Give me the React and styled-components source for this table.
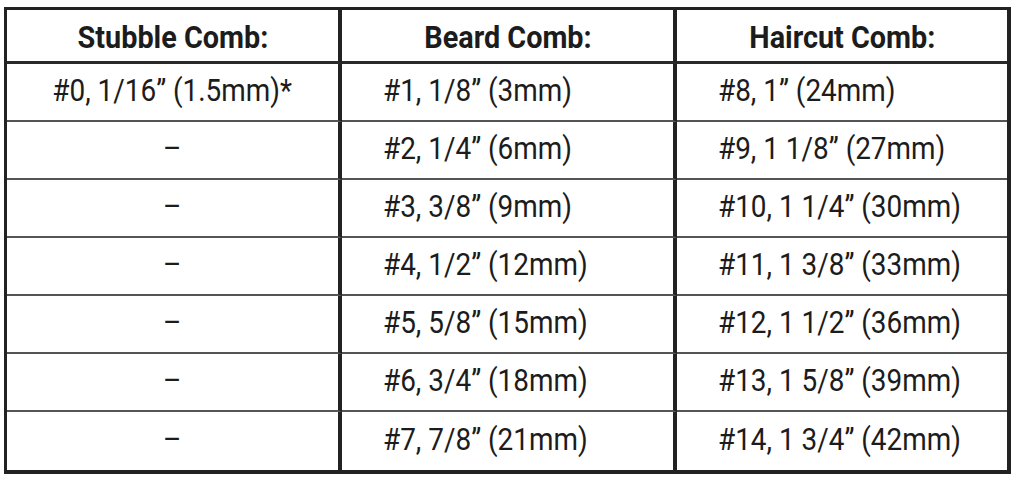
import React from 'react';
import styled, { createGlobalStyle } from 'styled-components';

const Global = createGlobalStyle`
  html, body {
    margin: 0;
    padding: 0;
    background: #ffffff;
  }
`;

const Page = styled.div`
  width: 1019px;
  height: 477px;
  padding: 7px 0 0 4px;
  box-sizing: border-box;
  background: #ffffff;
`;

const Table = styled.div`
  display: grid;
  grid-template-columns: 335px 335px 330px;
  grid-template-rows: 54px repeat(7, 58px);
  width: 1007px;
  border: 3px solid #222222;
  border-right-width: 4px;
  border-bottom-width: 4px;
  box-sizing: border-box;
  font-family: Roboto, 'Liberation Sans', Arial, sans-serif;
  color: #1c1c1c;
`;

const Cell = styled.div`
  display: flex;
  align-items: center;
  justify-content: ${({ $align }) => ($align === 'left' ? 'flex-start' : 'center')};
  padding-left: ${({ $align }) => ($align === 'left' ? '41px' : '0')};
  border-right: ${({ $last }) => ($last ? 'none' : '4px solid #222222')};
  border-bottom: ${({ $head, $lastRow }) =>
    $lastRow ? 'none' : $head ? '3px solid #2a2a2a' : '2px solid #555555'};
  box-sizing: border-box;
  overflow: hidden;
`;

const Label = styled.span`
  display: inline-block;
  white-space: nowrap;
  font-size: ${({ $head }) => ($head ? '32px' : '31px')};
  font-weight: ${({ $head }) => ($head ? 700 : 400)};
  transform: scaleX(0.9);
  transform-origin: ${({ $align }) => ($align === 'left' ? 'left center' : 'center')};
  margin-top: ${({ $head }) => ($head ? '2px' : '-4px')};
`;

const headers = ['Stubble Comb:', 'Beard Comb:', 'Haircut Comb:'];

const rows = [
  ['#0, 1/16\u201D (1.5mm)*', '#1, 1/8\u201D (3mm)', '#8, 1\u201D (24mm)'],
  ['\u2013', '#2, 1/4\u201D (6mm)', '#9, 1 1/8\u201D (27mm)'],
  ['\u2013', '#3, 3/8\u201D (9mm)', '#10, 1 1/4\u201D (30mm)'],
  ['\u2013', '#4, 1/2\u201D (12mm)', '#11, 1 3/8\u201D (33mm)'],
  ['\u2013', '#5, 5/8\u201D (15mm)', '#12, 1 1/2\u201D (36mm)'],
  ['\u2013', '#6, 3/4\u201D (18mm)', '#13, 1 5/8\u201D (39mm)'],
  ['\u2013', '#7, 7/8\u201D (21mm)', '#14, 1 3/4\u201D (42mm)'],
];

const App = () => (
  <Page>
    <Global />
    <Table>
      {headers.map((h, i) => (
        <Cell key={h} $head $last={i === 2}>
          <Label $head>{h}</Label>
        </Cell>
      ))}
      {rows.map((row, r) =>
        row.map((text, c) => {
          const align = c === 0 ? 'center' : 'left';
          return (
            <Cell
              key={`${r}-${c}`}
              $align={align}
              $last={c === 2}
              $lastRow={r === rows.length - 1}
            >
              <Label $align={align}>{text}</Label>
            </Cell>
          );
        })
      )}
    </Table>
  </Page>
);

export default App;
